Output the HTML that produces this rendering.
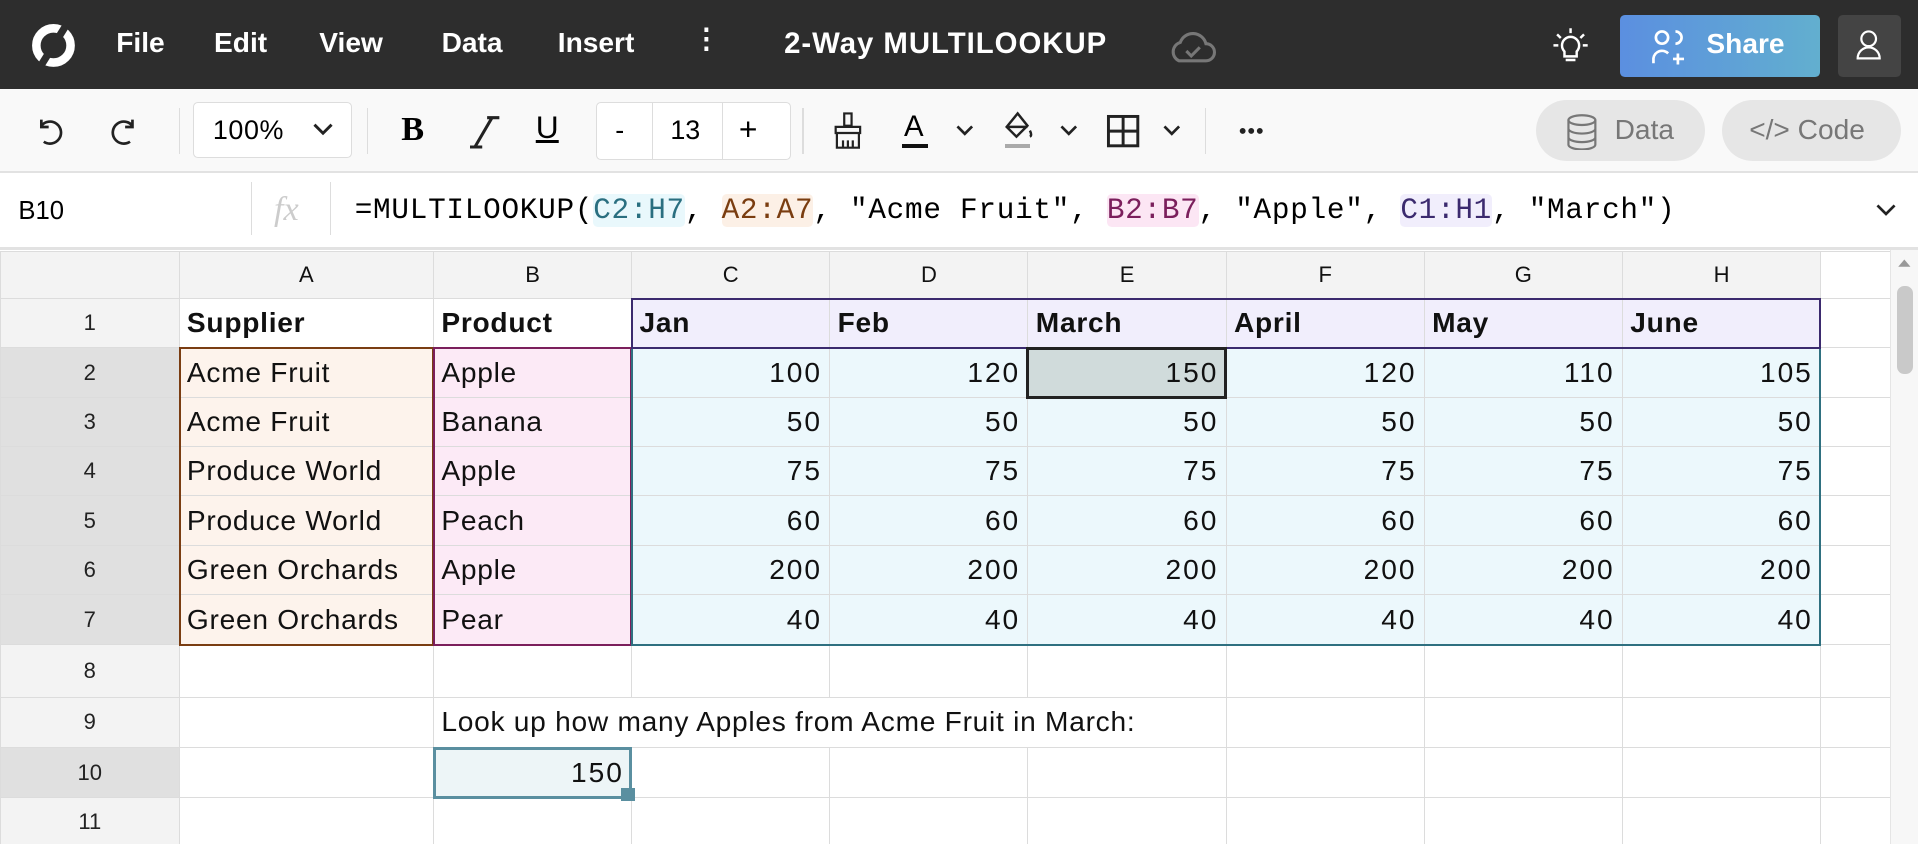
<!DOCTYPE html>
<html><head><meta charset="utf-8"><style>
html,body{margin:0;padding:0;overflow:hidden;background:#fff}
#w{zoom:1.22321;width:1568px;height:690px;position:relative;font-family:"Liberation Sans",sans-serif;overflow:hidden}
.top{position:absolute;left:0;top:0;width:1568px;height:73px;background:#2d2d2d;color:#fff}
.top .m{position:absolute;top:22px;font-size:23px;font-weight:bold}
.tb{position:absolute;left:0;top:73px;width:1568px;height:67px;background:#f9f9f9;border-bottom:2px solid #e2e2e2}
.fb{position:absolute;left:0;top:142px;width:1568px;height:60px;background:#fff;border-bottom:3px solid #e2e2e2}
.abs{position:absolute}
.sep{position:absolute;width:1px;background:#ddd}
table{position:absolute;left:0;top:205px;border-collapse:collapse;table-layout:fixed}
td{border:1px solid #dcdcdc;padding:0 6px;font-size:23px;letter-spacing:0.6px;color:#111;white-space:nowrap;overflow:visible}
td.h{background:#f3f3f3;text-align:center;font-size:18px;color:#222;letter-spacing:0}
tr.ch td{background:#f3f3f3;text-align:center;font-size:18px;height:38px;letter-spacing:0}
td.n{text-align:right;letter-spacing:1.6px;padding-right:6px}
.a{background:#fdf3ec}.b{background:#fceaf6}.c{background:#ecf8fc}.p{background:#f1eefc;font-weight:bold}
td.sel{background:#e0e0e0}
.ov{position:absolute;box-sizing:border-box;pointer-events:none}
.code{font-family:"Liberation Mono",monospace;font-size:24px;letter-spacing:0.6px}
</style></head><body><div id="w">
<div class="top">
<svg class="abs" style="left:24px;top:17px" width="40" height="40" viewBox="0 0 40 40"><circle cx="20" cy="20" r="14" fill="none" stroke="#fff" stroke-width="7"/><path d="M30 4 L10 36" stroke="#2d2d2d" stroke-width="6"/></svg>
<span class="m" style="left:95px">File</span><span class="m" style="left:175px">Edit</span><span class="m" style="left:261px">View</span><span class="m" style="left:361px">Data</span><span class="m" style="left:456px">Insert</span>
<span class="m" style="left:566px;top:18px">⋮</span>
<span class="m" style="left:641px;font-size:24px;letter-spacing:0.8px">2-Way MULTILOOKUP</span>
<svg class="abs" style="left:955px;top:24px" width="40" height="30" viewBox="0 0 40 30"><path d="M9 26 A8 8 0 0 1 10 11 A11 11 0 0 1 31 12 A7 7 0 0 1 31 26 Z" fill="none" stroke="#777" stroke-width="2.5"/><path d="M15 18 l4 4 l7 -7" fill="none" stroke="#777" stroke-width="2.5"/></svg>
<svg class="abs" style="left:1268px;top:22px" width="32" height="32" viewBox="0 0 32 32" fill="none" stroke="#fff" stroke-width="2"><path d="M11 20 a7 7 0 1 1 10 0 v4 h-10z M12 27 h8 M16 1 v4 M5 6 l3 3 M27 6 l-3 3 M2 15 h4 M26 15 h4"/></svg>
<div class="abs" style="left:1324px;top:12px;width:164px;height:51px;border-radius:4px;background:linear-gradient(90deg,#5b8fe0,#62afcf)"></div>
<svg class="abs" style="left:1350px;top:24px" width="34" height="30" viewBox="0 0 34 30" fill="none" stroke="#fff" stroke-width="2.2"><circle cx="9" cy="7" r="5"/><path d="M2 28 v-4 a7 7 0 0 1 12 -4 M20 2 a5 5 0 0 1 0 10 M22 20 v9 M18 24.5 h9"/></svg>
<span class="m" style="left:1395px;top:23px">Share</span>
<div class="abs" style="left:1503px;top:12px;width:51px;height:51px;border-radius:4px;background:#444"></div>
<svg class="abs" style="left:1516px;top:24px" width="24" height="26" viewBox="0 0 24 26" fill="none" stroke="#fff" stroke-width="1.8"><circle cx="12" cy="8" r="6"/><path d="M3 24 a9 9 0 0 1 18 0 z"/></svg>
</div>
<div class="tb">
<svg class="abs" style="left:28px;top:22px" width="26" height="26" viewBox="0 0 26 26" fill="none" stroke="#222" stroke-width="2.2"><path d="M6 8 A9 9 0 1 1 8 21 M6 3 v6 h6"/></svg>
<svg class="abs" style="left:88px;top:22px" width="26" height="26" viewBox="0 0 26 26" fill="none" stroke="#222" stroke-width="2.2"><path d="M20 8 A9 9 0 1 0 18 21 M20 3 v6 h-6"/></svg>
<div class="sep" style="left:146px;top:15px;height:38px"></div>
<div class="abs" style="left:158px;top:10px;width:130px;height:46px;border:1px solid #ddd;border-radius:4px;background:#fff;box-sizing:border-box"></div>
<span class="abs" style="left:174px;top:21px;font-size:22px;letter-spacing:0.5px">100%</span>
<svg class="abs" style="left:255px;top:26px" width="18" height="14"><path d="M2 3 l7 7 l7 -7" fill="none" stroke="#222" stroke-width="2.4"/></svg>
<div class="sep" style="left:300px;top:15px;height:38px"></div>
<span class="abs" style="left:328px;top:17px;font-size:28px;font-weight:bold;font-family:'Liberation Serif',serif">B</span>
<svg class="abs" style="left:384px;top:20px" width="26" height="30"><path d="M4 27 L18 3 M0 27 h10 M14 3 h10" stroke="#222" stroke-width="2.5"/></svg>
<span class="abs" style="left:438px;top:16px;font-size:26px;text-decoration:underline">U</span>
<div class="abs" style="left:487px;top:10px;width:160px;height:48px;border:1px solid #ddd;border-radius:4px;background:#fff;box-sizing:border-box"></div>
<div class="sep" style="left:533px;top:11px;height:46px"></div><div class="sep" style="left:590px;top:11px;height:46px"></div>
<span class="abs" style="left:503px;top:21px;font-size:22px">-</span>
<span class="abs" style="left:548px;top:21px;font-size:22px">13</span>
<span class="abs" style="left:604px;top:18px;font-size:26px">+</span>
<div class="sep" style="left:656px;top:15px;height:38px"></div>
<svg class="abs" style="left:680px;top:18px" width="26" height="32" viewBox="0 0 26 32" fill="none" stroke="#222" stroke-width="1.8"><path d="M10 2 h6 v10 h-6z M3 13 h20 v5 h-20z M4 18 v12 h18 v-12 M9 24 v6 M13 24 v6 M17 24 v6"/></svg>
<span class="abs" style="left:739px;top:17px;font-size:24px">A</span><div class="abs" style="left:737px;top:45px;width:22px;height:3px;background:#111"></div>
<svg class="abs" style="left:781px;top:28px" width="16" height="12"><path d="M2 2 l6 6 l6 -6" fill="none" stroke="#222" stroke-width="2.2"/></svg>
<svg class="abs" style="left:820px;top:18px" width="26" height="26" viewBox="0 0 26 26" fill="none" stroke="#222" stroke-width="2"><path d="M12 2 L3 13 L11 21 L20 12 Z M3 13 h17 M22 16 q2 4 0 5"/></svg>
<div class="abs" style="left:822px;top:45px;width:20px;height:3px;background:#aaa"></div>
<svg class="abs" style="left:866px;top:28px" width="16" height="12"><path d="M2 2 l6 6 l6 -6" fill="none" stroke="#222" stroke-width="2.2"/></svg>
<svg class="abs" style="left:904px;top:20px" width="28" height="28"><rect x="2" y="2" width="24" height="24" fill="none" stroke="#222" stroke-width="2.4"/><path d="M14 2 v24 M2 14 h24" stroke="#222" stroke-width="2.4"/></svg>
<svg class="abs" style="left:950px;top:28px" width="16" height="12"><path d="M2 2 l6 6 l6 -6" fill="none" stroke="#222" stroke-width="2.2"/></svg>
<div class="sep" style="left:985px;top:15px;height:38px"></div>
<svg class="abs" style="left:1013px;top:30px" width="22" height="8"><circle cx="3" cy="4" r="2.4" fill="#222"/><circle cx="10" cy="4" r="2.4" fill="#222"/><circle cx="17" cy="4" r="2.4" fill="#222"/></svg>
<div class="abs" style="left:1256px;top:9px;width:138px;height:50px;border-radius:25px;background:#e6e6e6"></div>
<svg class="abs" style="left:1280px;top:20px" width="26" height="30" viewBox="0 0 26 30" fill="none" stroke="#777" stroke-width="1.8"><ellipse cx="13" cy="5" rx="11" ry="4"/><path d="M2 5 v20 a11 4 0 0 0 22 0 v-20 M2 12 a11 4 0 0 0 22 0 M2 19 a11 4 0 0 0 22 0"/></svg>
<span class="abs" style="left:1320px;top:20px;font-size:23px;color:#777">Data</span>
<div class="abs" style="left:1408px;top:9px;width:146px;height:50px;border-radius:25px;background:#e6e6e6"></div>
<span class="abs" style="left:1430px;top:20px;font-size:23px;color:#777">&lt;/&gt; Code</span>
</div>
<div class="fb">
<span class="abs" style="left:15px;top:19px;font-size:21px">B10</span>
<div class="sep" style="left:205px;top:7px;height:43px"></div>
<span class="abs" style="left:224px;top:13px;font-size:28px;color:#ccc;font-style:italic;font-family:'Liberation Serif',serif">fx</span>
<div class="sep" style="left:270px;top:7px;height:43px"></div>
<span class="abs code" style="left:290px;top:17px">=MULTILOOKUP(<span style="background:#e9f8fc;color:#2a6f80;border-radius:4px">C2:H7</span>, <span style="background:#fcf0e6;color:#7a3d10;border-radius:4px">A2:A7</span>, "Acme Fruit", <span style="background:#fce6f4;color:#7b1f5c;border-radius:4px">B2:B7</span>, "Apple", <span style="background:#f1eefc;color:#3b2a6e;border-radius:4px">C1:H1</span>, "March")</span>
<svg class="abs" style="left:1533px;top:24px" width="18" height="12"><path d="M2 2 l7 7 l7 -7" fill="none" stroke="#222" stroke-width="2.2"/></svg>
</div>
<table>
<colgroup><col style="width:146px"><col style="width:208px"><col style="width:162px"><col style="width:162px"><col style="width:162px"><col style="width:162px"><col style="width:162px"><col style="width:162px"><col style="width:162px"><col style="width:57px"></colgroup>
<tr class="ch"><td></td><td>A</td><td>B</td><td>C</td><td>D</td><td>E</td><td>F</td><td>G</td><td>H</td><td style="background:#fff"></td></tr>
<tr style="height:40px"><td class="h">1</td><td style="font-weight:bold">Supplier</td><td style="font-weight:bold">Product</td><td class="p">Jan</td><td class="p">Feb</td><td class="p">March</td><td class="p">April</td><td class="p">May</td><td class="p">June</td><td></td></tr>
<tr style="height:41px"><td class="h sel">2</td><td class="a">Acme Fruit</td><td class="b">Apple</td><td class="c n">100</td><td class="c n">120</td><td class="n" style="background:#d0dbdb">150</td><td class="c n">120</td><td class="c n">110</td><td class="c n">105</td><td></td></tr>
<tr style="height:40px"><td class="h sel">3</td><td class="a">Acme Fruit</td><td class="b">Banana</td><td class="c n">50</td><td class="c n">50</td><td class="c n">50</td><td class="c n">50</td><td class="c n">50</td><td class="c n">50</td><td></td></tr>
<tr style="height:40px"><td class="h sel">4</td><td class="a">Produce World</td><td class="b">Apple</td><td class="c n">75</td><td class="c n">75</td><td class="c n">75</td><td class="c n">75</td><td class="c n">75</td><td class="c n">75</td><td></td></tr>
<tr style="height:41px"><td class="h sel">5</td><td class="a">Produce World</td><td class="b">Peach</td><td class="c n">60</td><td class="c n">60</td><td class="c n">60</td><td class="c n">60</td><td class="c n">60</td><td class="c n">60</td><td></td></tr>
<tr style="height:40px"><td class="h sel">6</td><td class="a">Green Orchards</td><td class="b">Apple</td><td class="c n">200</td><td class="c n">200</td><td class="c n">200</td><td class="c n">200</td><td class="c n">200</td><td class="c n">200</td><td></td></tr>
<tr style="height:41px"><td class="h sel">7</td><td class="a">Green Orchards</td><td class="b">Pear</td><td class="c n">40</td><td class="c n">40</td><td class="c n">40</td><td class="c n">40</td><td class="c n">40</td><td class="c n">40</td><td></td></tr>
<tr style="height:43px"><td class="h">8</td><td></td><td></td><td></td><td></td><td></td><td></td><td></td><td></td><td></td></tr>
<tr style="height:41px"><td class="h">9</td><td></td><td colspan="4">Look up how many Apples from Acme Fruit in March:</td><td></td><td></td><td></td><td></td></tr>
<tr style="height:41px"><td class="h sel">10</td><td></td><td class="n" style="background:#edf5f7">150</td><td></td><td></td><td></td><td></td><td></td><td></td><td></td></tr>
<tr style="height:40px"><td class="h">11</td><td></td><td></td><td></td><td></td><td></td><td></td><td></td><td></td><td></td></tr>
</table>
<div class="ov" style="left:146px;top:284px;width:209px;height:244px;border:2px solid #7a3d12"></div>
<div class="ov" style="left:354px;top:284px;width:163px;height:244px;border:2px solid #7b1f5c"></div>
<div class="ov" style="left:516px;top:284px;width:973px;height:244px;border:2px solid #2f7080"></div>
<div class="ov" style="left:516px;top:244px;width:973px;height:41px;border:2px solid #3b2a6e"></div>
<div class="ov" style="left:839px;top:284px;width:164px;height:42px;border:3px solid #222"></div>
<div class="ov" style="left:354px;top:611px;width:163px;height:42px;border:3px solid #5a8fa0"></div>
<div class="ov" style="left:508px;top:644px;width:11px;height:11px;background:#5a8fa0"></div>
<div class="abs" style="left:1545px;top:204px;width:23px;height:486px;background:#f7f7f7;border-left:1px solid #e5e5e5"></div>
<div class="abs" style="left:1551px;top:234px;width:13px;height:72px;border-radius:6px;background:#c9c9c9"></div>
<svg class="abs" style="left:1551px;top:210px" width="12" height="10"><path d="M1 8 L6 2 L11 8Z" fill="#999"/></svg>
</div></body></html>
